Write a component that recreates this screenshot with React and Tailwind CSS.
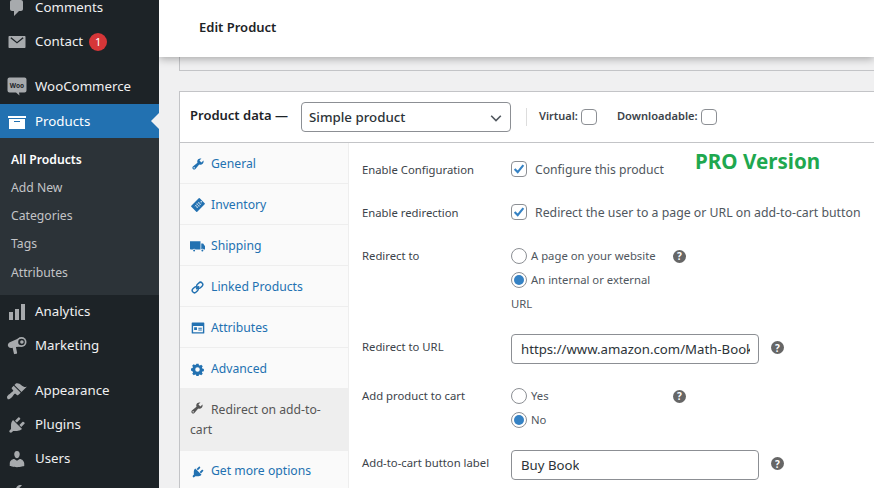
const Dash = ({ d, className = "", size = 20 }) => (
  <svg viewBox="0 0 20 20" width={size} height={size} className={"shrink-0 fill-current " + className}>
    <path d={d} />
  </svg>
);

const P = {
  comments: "M5 2h9c1.100 0 2 .9 2 2v7c0 1.100-.9 2-2 2h-2l-5 5v-5H5c-1.100 0-2-.9-2-2V4c0-1.100.9-2 2-2z",
  mail: "M2.500 4h15c.6 0 1 .4 1 1v10c0 .6-.4 1-1 1h-15c-.6 0-1-.4-1-1V5c0-.6.4-1 1-1zm.9 2.200L10 11.600l6.600-5.400-.9-.9L10 9.900 4.300 5.300z",
  archive: "M19 4v2H1V4h18zM2 7h16v10H2V7zm11 3V9H7v1h6z",
  bars: "M18 18V2h-4v16h4zm-6 0V7H8v11h4zm-6 0v-8H2v8h4z",
  brush: "M14.480 11.060L7.410 3.990l1.500-1.500c.5-.56 2.300-.47 3.510.32 1.210.8 1.430 1.280 2.910 2.100 1.180.64 2.450 1.260 4.450.85zm-.71.71L6.700 4.700 4.930 6.470c-.39.39-.39 1.020 0 1.410l1.060 1.060c.39.39.39 1.030 0 1.420-.6.6-1.430 1.110-2.210 1.690-.35.26-.7.53-1.010.84C1.430 13.230 0 15.250 0 16s.63 2 .63 2 .04.35.7.37c.75 0 2.520-1.160 3.520-2.160.3-.31.57-.66.83-1.010.58-.78 1.090-1.610 1.690-2.210.39-.39 1.020-.39 1.410 0l1.060 1.060c.39.39 1.020.39 1.410 0z",
  plug: "M13.110 4.360L9.870 7.600 8 5.730l3.240-3.240c.35-.34 1.050-.2 1.560.32.52.51.66 1.210.31 1.550zm-8 1.770l.91-1.120 9.010 9.010-1.190.84c-.71.71-2.630 1.160-3.820 1.160H6.140L4.900 17.260c-.59.59-1.540.59-2.120 0-.59-.58-.59-1.530 0-2.120l1.240-1.240v-3.880c0-1.130.4-3.190 1.090-3.890zm7.260 3.970l3.240-3.240c.34-.35 1.040-.21 1.550.31.52.51.66 1.210.31 1.550l-3.240 3.250z",
  user: "M10 9.250c-2.270 0-2.730-3.440-2.730-3.440C7 4.020 7.820 2 9.970 2c2.160 0 2.980 2.020 2.710 3.810 0 0-.41 3.440-2.680 3.440zm0 2.570L12.720 10c2.390 0 4.520 2.330 4.520 4.530v2.490s-3.650 1.130-7.240 1.130c-3.650 0-7.240-1.130-7.240-1.130v-2.490c0-2.250 1.940-4.480 4.470-4.480z",
  wrench: "M16.680 9.770c-1.340 1.340-3.300 1.670-4.950.99l-5.410 6.520c-.99.99-2.590.99-3.580 0s-.99-2.590 0-3.570l6.520-5.420c-.68-1.650-.35-3.610.99-4.950 1.280-1.280 3.120-1.620 4.720-1.060l-2.890 2.890 2.820 2.820 2.860-2.870c.53 1.580.18 3.390-1.080 4.650zM3.810 16.210c.4.39 1.040.39 1.430 0 .4-.4.4-1.040 0-1.430-.39-.4-1.030-.4-1.430 0-.39.39-.39 1.030 0 1.430z",
  truck: "M0 3h14v11H7.300a2 2 0 00-3.600 0H1a1 1 0 01-1-1zm15 3h2.500l2.500 3.500V14h-1.700a2 2 0 00-3.300-.4zM5.500 14a1.300 1.300 0 110 2.600 1.300 1.300 0 010-2.600zm11 0a1.300 1.300 0 110 2.600 1.300 1.300 0 010-2.600z",
  attrs: "M2 2h16a1 1 0 011 1v14a1 1 0 01-1 1H2a1 1 0 01-1-1V3a1 1 0 011-1zm1 5v9h14V7zm1.500 2h4v4h-4zm6 .5h5V11h-5zm0 2.500h5v1.500h-5z",
};

const Megaphone = () => (
  <svg viewBox="0 0 20 20" width="20" height="20" className="shrink-0">
    <g fill="currentColor">
      <path d="M13 1.800L2.800 6.200C1.200 6.900.5 8.600 1 10c.5 1.400 2 2.200 3.600 1.900l1-.2 1.300 5.900c.1.4.4.600.8.500l1.900-.4c.4-.1.6-.5.500-.9l-1.200-5.900 6.500-.5z" />
      <circle cx="14.500" cy="6" r="5" />
    </g>
    <circle cx="14.500" cy="6" r="3.300" fill="#1d2327" />
    <circle cx="14.900" cy="6" r="1.800" fill="currentColor" />
  </svg>
);

const Gear = ({ className = "" }) => (
  <svg viewBox="0 0 20 20" width="13" height="13" className={"shrink-0 fill-current " + className}>
    <path fillRule="evenodd" d="M8.300 1h3.400l.5 2.400 1.500.6 2-1.300 2.400 2.400-1.300 2 .6 1.500 2.400.5v3.400l-2.400.5-.6 1.500 1.300 2-2.400 2.400-2-1.300-1.500.6-.5 2.400H8.300l-.5-2.400-1.500-.6-2 1.300-2.400-2.400 1.300-2-.6-1.500L0 11.700V8.300l2.400-.5.6-1.500-1.300-2 2.400-2.400 2 1.300 1.500-.6zM10 6.500a3.500 3.500 0 100 7 3.500 3.500 0 000-7z" />
  </svg>
);

const TagIcon = () => (
  <svg viewBox="0 0 20 20" width="14" height="14" className="shrink-0">
    <g transform="rotate(45 10 10)">
      <rect x="4" y="1.500" width="12" height="17" rx="1" fill="#2271b1" />
      <path d="M7 7h6M7 10h6M7 13h6M8.500 5.500v9M11.500 5.500v9" stroke="#cfe0ee" strokeWidth="0.900" fill="none" />
      <circle cx="10" cy="3.600" r="1" fill="#fafafa" />
    </g>
  </svg>
);

const LinkIcon = ({ className = "" }) => (
  <svg viewBox="0 0 20 20" width="13" height="13" fill="none" stroke="currentColor" strokeWidth="2.200" className={"shrink-0 " + className}>
    <path d="M8 12.500l4.500-4.500" />
    <rect x="10" y="1.500" width="7" height="10" rx="3.500" transform="rotate(45 13.500 6.500)" />
    <rect x="3" y="8.500" width="7" height="10" rx="3.500" transform="rotate(45 6.500 13.500)" />
  </svg>
);

const Woo = () => (
  <svg viewBox="0 0 20 20" width="20" height="20" className="shrink-0">
    <path fill="#a7aaad" d="M2.500 0.500h15a2 2 0 012 2v11a2 2 0 01-2 2H12l.5 3-3.500-3H2.500a2 2 0 01-2-2v-11a2 2 0 012-2z" />
    <text x="10" y="10.500" textAnchor="middle" fontSize="6.500" fontWeight="700" fill="#1d2327" fontFamily="'Noto Sans',sans-serif">Woo</text>
  </svg>
);

const MenuItem = ({ icon, label, badge, active }) => (
  <div className={"flex h-[34px] items-center pl-[7px] text-[13.300px] " + (active ? "relative bg-[#2271b1] pt-[1px] text-white" : "text-[#f0f0f1]")}>
    <span className={"flex w-[28px] " + (active ? "text-white" : "text-[#a7aaad]")}>{icon}</span>
    {label && <span>{label}</span>}
    {badge && (
      <span className="ml-[6px] flex h-[18px] w-[18px] items-center justify-center rounded-full bg-[#d63638] text-[11px] text-white">{badge}</span>
    )}
    {active && <span className="absolute right-0 top-[9px] h-0 w-0 border-y-[8px] border-r-[8px] border-y-transparent border-r-[#f0f0f1]" />}
  </div>
);

const Sidebar = () => (
  <aside className="h-[488px] w-[159px] shrink-0 overflow-hidden bg-[#1d2327]">
    <div className="mt-[-9px]">
      <MenuItem icon={<Dash d={P.comments} />} label="Comments" />
      <MenuItem icon={<Dash d={P.mail} />} label="Contact" badge="1" />
      <div className="h-[11px]" />
      <MenuItem icon={<Woo />} label="WooCommerce" />
      <MenuItem active icon={<Dash d={P.archive} />} label="Products" />
      <div className="flex h-[157px] flex-col bg-[#2c3338] pt-[8px] text-[12.200px] text-[#c3c4c7]">
        <div className="flex h-[28px] items-center pl-[11px] font-semibold text-white">All Products</div>
        <div className="flex h-[28px] items-center pl-[11px]">Add New</div>
        <div className="flex h-[28px] items-center pl-[11px]">Categories</div>
        <div className="flex h-[29px] items-center pl-[11px]">Tags</div>
        <div className="flex h-[29px] items-center pl-[11px]">Attributes</div>
      </div>
      <MenuItem icon={<Dash d={P.bars} />} label="Analytics" />
      <MenuItem icon={<Megaphone />} label="Marketing" />
      <div className="h-[11px]" />
      <MenuItem icon={<Dash d={P.brush} />} label="Appearance" />
      <MenuItem icon={<Dash d={P.plug} />} label="Plugins" />
      <MenuItem icon={<Dash d={P.user} />} label="Users" />
      <MenuItem icon={<Dash d={P.wrench} />} />
    </div>
  </aside>
);

const Tab = ({ icon, label, last }) => (
  <div className={"flex h-[41px] shrink-0 items-center gap-[6px] pl-[10px] text-[12.200px] text-[#2271b1] " + (last ? "pt-0" : "border-b border-[#eeeeee] pt-[2px]")}>
    <span className="flex w-[15px] justify-center">{icon}</span>
    <span>{label}</span>
  </div>
);

const Tabs = () => (
  <div className="flex w-[169px] shrink-0 flex-col border-r border-[#eeeeee] bg-[#fafafa]">
    <Tab icon={<Dash size={14} d={P.wrench} />} label="General" />
    <Tab icon={<TagIcon />} label="Inventory" />
    <Tab icon={<Dash size={15} d={P.truck} />} label="Shipping" />
    <Tab icon={<LinkIcon />} label="Linked Products" />
    <Tab icon={<Dash size={14} d={P.attrs} />} label="Attributes" />
    <Tab icon={<Gear />} label="Advanced" />
    <div className="h-[62px] shrink-0 bg-[#eeeeee] pl-[10px] pr-[14px] pt-[11px] text-[12.200px] leading-[20px] text-[#555555]">
      <Dash size={14} d={P.wrench} className="mr-[7px] inline-block align-[-1px]" />
      Redirect on add-to-cart
    </div>
    <Tab icon={<Dash size={14} d={P.plug} />} label="Get more options" last />
  </div>
);

const Check = ({ on }) => (
  <span className="flex h-[16px] w-[16px] shrink-0 items-center justify-center rounded-[4px] border border-[#8c8f94] bg-white">
    {on && (
      <svg viewBox="0 0 16 16" width="14" height="14" fill="none" stroke="#3582c4" strokeWidth="2.400">
        <path d="M3 8l3.500 3.500L13 3.500" />
      </svg>
    )}
  </span>
);

const Radio = ({ on }) => (
  <span className="flex h-[16px] w-[16px] shrink-0 items-center justify-center rounded-full border border-[#8c8f94] bg-white">
    {on && <span className="h-[10px] w-[10px] rounded-full bg-[#3582c4]" />}
  </span>
);

const Help = () => (
  <span className="flex h-[13px] w-[13px] shrink-0 items-center justify-center rounded-full bg-[#666666] text-[10px] font-bold leading-none text-white">?</span>
);

const Label = ({ children }) => <div className="w-[149px] shrink-0 whitespace-nowrap text-[11.300px] leading-[18px] text-[#3c434a]">{children}</div>;

const RadioRow = ({ on, label, help }) => (
  <div className="flex h-[24px] items-center text-[11.300px] text-[#50575e]">
    <Radio on={on} />
    <span className="ml-[4px] w-[142px] whitespace-nowrap">{label}</span>
    {help && <Help />}
  </div>
);

const TextBox = ({ value }) => (
  <div className="flex h-[30px] w-[248px] shrink-0 items-center overflow-hidden whitespace-nowrap rounded-[4px] border border-[#8c8f94] bg-white pl-[9px] pr-[8px] pt-[1px] text-[13.200px] text-[#2c3338]">
    <span className="overflow-hidden">{value}</span>
  </div>
);

const Form = () => (
  <div className="relative flex-1 pl-[13px] text-[#50575e]">
    <span className="absolute left-[346px] top-[3px] text-[20.600px] font-bold text-[#1fa84f]">PRO Version</span>
    <div className="flex h-[43px] items-start pt-[18px]">
      <Label>Enable Configuration</Label>
      <Check on />
      <span className="ml-[8px] text-[12.200px] leading-[18px]">Configure this product</span>
    </div>
    <div className="flex h-[43px] items-start pt-[18px]">
      <Label>Enable redirection</Label>
      <Check on />
      <span className="ml-[8px] whitespace-nowrap text-[12.300px] leading-[18px]">Redirect the user to a page or URL on add-to-cart button</span>
    </div>
    <div className="flex h-[105px] items-start pt-[18px]">
      <Label>Redirect to</Label>
      <div className="-mt-[3px]">
        <RadioRow label="A page on your website" help />
        <RadioRow on label="An internal or external" />
        <div className="text-[11.300px] leading-[24px]">URL</div>
      </div>
    </div>
    <div className="flex h-[49px] items-start">
      <div className="pt-[4px]"><Label>Redirect to URL</Label></div>
      <TextBox value="https://www.amazon.com/Math-Book" />
      <span className="ml-[12px] mt-[7px]"><Help /></span>
    </div>
    <div className="flex h-[67px] items-start pt-[4px]">
      <Label>Add product to cart</Label>
      <div className="-mt-[3px]">
        <RadioRow label="Yes" help />
        <RadioRow on label="No" />
      </div>
    </div>
    <div className="flex h-[40px] items-start">
      <div className="pt-[4px]"><Label>Add-to-cart button label</Label></div>
      <TextBox value="Buy Book" />
      <span className="ml-[12px] mt-[7px]"><Help /></span>
    </div>
  </div>
);

const Main = () => (
  <main className="relative flex min-w-0 flex-1 flex-col overflow-hidden bg-[#f0f0f1]">
    <header className="z-10 flex h-[57px] shrink-0 items-center bg-white pb-[2px] pl-[40px] text-[13px] font-semibold text-[#1d2327] shadow-[0_2px_8px_rgba(0,0,0,0.3)]">
      Edit Product
    </header>
    <div className="ml-[20px] h-[14px] shrink-0 border-b border-l border-[#c3c4c7] bg-[#f0f0f1]" />
    <section className="ml-[20px] mt-[20px] flex-1 border-l border-t border-[#c3c4c7] bg-white">
      <div className="flex h-[51px] items-center border-b border-[#c3c4c7] pl-[10px]">
        <span className="w-[100px] shrink-0 -translate-y-[1px] whitespace-nowrap text-[13px] font-semibold text-[#1d2327]">Product data —</span>
        <div className="ml-[11px] flex h-[30px] w-[210px] items-center justify-between rounded-[4px] border border-[#8c8f94] bg-white pl-[7px] pr-[7px] pt-[1px] text-[13.300px] font-medium text-[#2c3338]">
          Simple product
          <svg viewBox="0 0 16 16" width="14" height="14" fill="none" stroke="#50575e" strokeWidth="1.800"><path d="M2.500 5.500L8 11l5.500-5.500" /></svg>
        </div>
        <span className="ml-[15px] h-[18px] w-px bg-[#dddddd]" />
        <span className="ml-[12px] w-[39px] -translate-y-[1px] whitespace-nowrap text-[11px] font-semibold text-[#3c434a]">Virtual:</span>
        <span className="ml-[3px]"><Check /></span>
        <span className="ml-[20px] w-[81px] -translate-y-[1px] whitespace-nowrap text-[11.100px] font-semibold text-[#3c434a]">Downloadable:</span>
        <span className="ml-[3px]"><Check /></span>
      </div>
      <div className="flex">
        <Tabs />
        <Form />
      </div>
    </section>
  </main>
);

export default function App() {
  return (
    <div className="flex h-[488px] w-[874px] overflow-hidden font-['Noto_Sans','Open_Sans',sans-serif]">
      <Sidebar />
      <Main />
    </div>
  );
}
